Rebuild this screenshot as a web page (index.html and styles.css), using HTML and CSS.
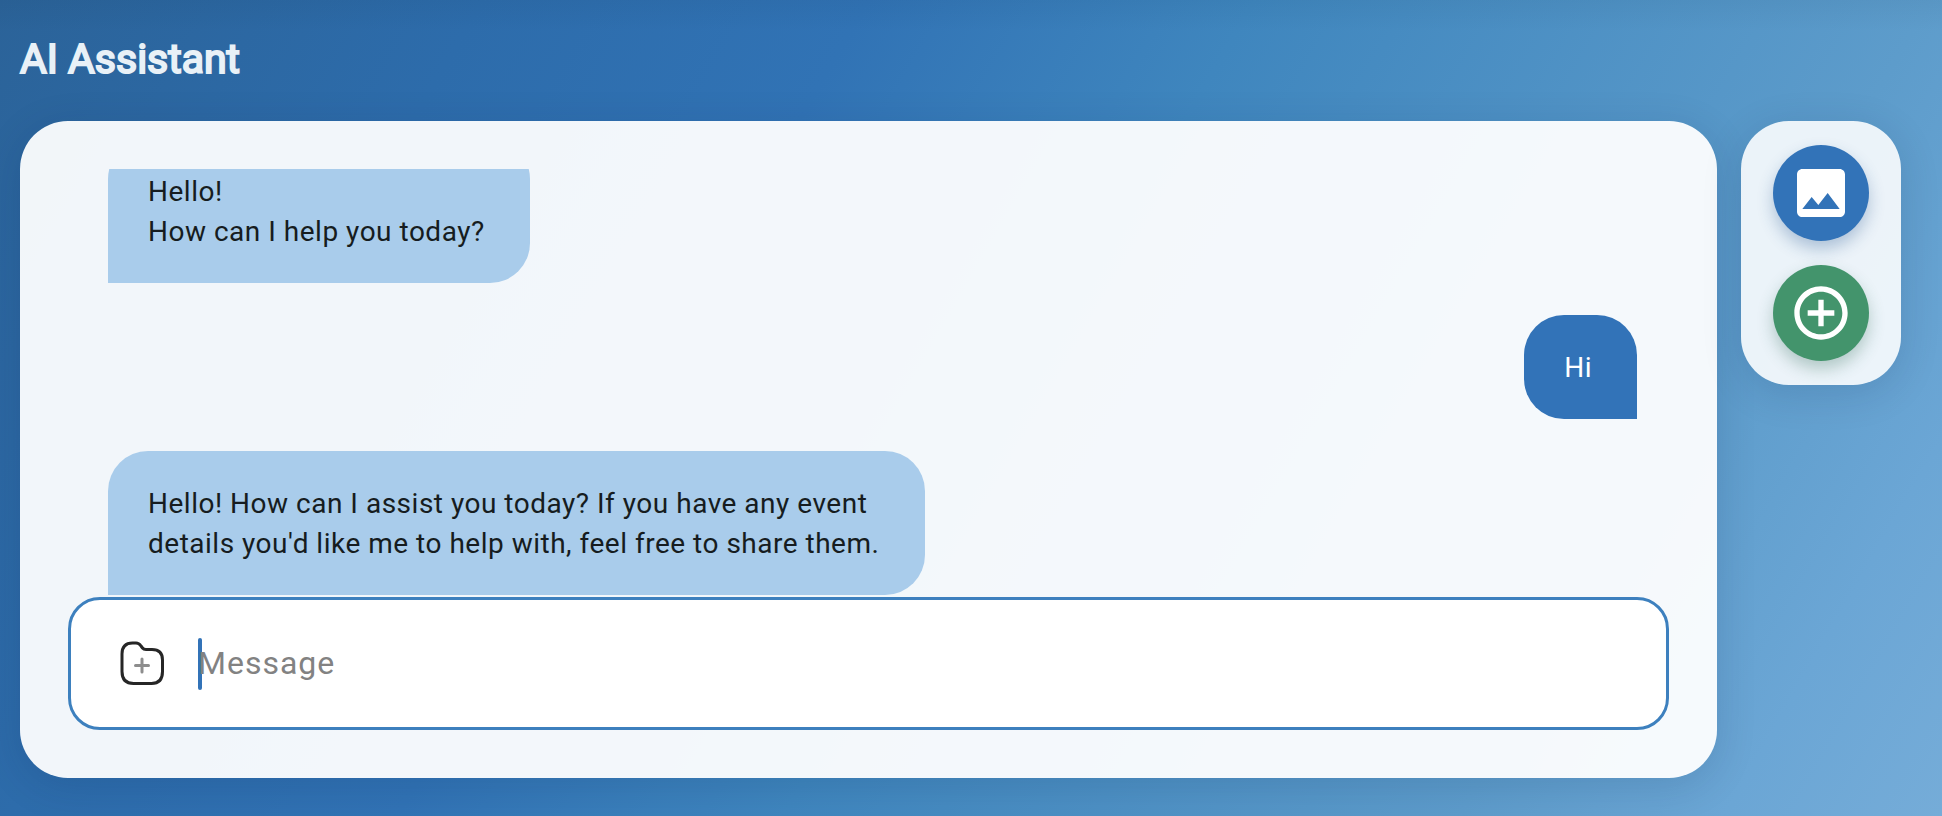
FILE: index.html
```html
<!DOCTYPE html>
<html lang="en">
<head>
<meta charset="utf-8">
<meta name="viewport" content="width=device-width, initial-scale=1">
<title>AI Assistant</title>
<link rel="stylesheet" href="styles.css">
</head>
<body>
<div class="page">
  <header class="header"><h1 class="title">AI Assistant</h1></header>
  <div class="workspace">
    <main class="chat">
      <section class="messages" aria-label="Conversation">
        <p class="bubble bubble-bot">Hello!<br>How can I help you today?</p>
        <p class="bubble bubble-user">Hi</p>
        <p class="bubble bubble-bot">Hello! How can I assist you today? If you have any event details you'd like me to help with, feel free to share them.</p>
      </section>
      <form class="composer">
        <button class="attach" type="button" aria-label="Add attachment">
          <svg viewBox="0 0 48 48" fill="none" stroke-linecap="round" stroke-linejoin="round">
            <path d="M3 14C3 6.500 6.500 3 13.500 3H17C19.500 3 20.500 3.800 22 6L23.500 8C24.500 9.300 25.500 9.500 27 9.500H33C40 9.500 43.500 13 43.500 20V31.500C43.500 39.500 39.500 43.500 32.500 43.500H14.500C6.500 43.500 3 39.500 3 31.500Z" stroke="#262626" stroke-width="3"/>
            <path d="M23 19V32M16.500 25.500H29.500" stroke="#8d8d8d" stroke-width="3"/>
          </svg>
        </button>
        <span class="caret"></span>
        <input class="message-input" type="text" placeholder="Message" aria-label="Message">
      </form>
    </main>
    <aside class="actions" aria-label="Actions">
      <button class="action action-image" type="button" aria-label="Add image">
        <svg viewBox="0 0 24 24" fill="#fff"><path d="M21 19V5c0-1.100-.9-2-2-2H5c-1.100 0-2 .9-2 2v14c0 1.100.9 2 2 2h14c1.100 0 2-.9 2-2zM8.500 13.500l2.500 3.010L14.500 12l4.500 6H5l3.500-4.500z"/></svg>
      </button>
      <button class="action action-new" type="button" aria-label="New chat">
        <svg viewBox="0 0 24 24" fill="#fff"><path d="M13 7h-2v4H7v2h4v4h2v-4h4v-2h-4V7zm-1-5C6.480 2 2 6.480 2 12s4.480 10 10 10 10-4.480 10-10S17.520 2 12 2zm0 18c-4.410 0-8-3.590-8-8s3.590-8 8-8 8 3.590 8 8-3.590 8-8 8z"/></svg>
      </button>
    </aside>
  </div>
</div>
</body>
</html>
```
FILE: styles.css
```css
* {
  box-sizing: border-box;
}

body {
  margin: 0;
  font-family: Roboto, "Liberation Sans", sans-serif;
  color: #161c20;
}

.page {
  display: flex;
  flex-direction: column;
  height: 100vh;
  padding: 0 41px 38px 20px;
  background:
    linear-gradient(rgba(0, 30, 50, 0.05), rgba(0, 30, 50, 0) 32px),
    linear-gradient(120deg, #2b6399 0%, #2d6cab 20%, #3173b5 36%, #3f86be 52%, #5d9ccb 80%, #6ba6d5 91%, #75acd8 100%);
}

.header {
  display: flex;
  flex: none;
  align-items: center;
  height: 121px;
  padding-bottom: 4px;
}

.title {
  margin: 0;
  font-size: 41px;
  line-height: 48px;
  font-weight: 400;
  color: #e9f1f7;
  -webkit-text-stroke: 2px #e9f1f7;
}

.workspace {
  display: flex;
  flex: 1;
  align-items: flex-start;
  gap: 24px;
  min-height: 0;
}

.chat {
  display: flex;
  flex: 1;
  flex-direction: column;
  align-self: stretch;
  min-width: 0;
  padding: 48px;
  border-radius: 48px;
  background: rgba(255, 255, 255, 0.94);
  box-shadow: 0 8px 40px rgba(0, 30, 70, 0.14);
}

.messages {
  display: flex;
  flex: 1;
  flex-direction: column;
  justify-content: flex-end;
  gap: 32px;
  min-height: 0;
  padding: 0 32px 2px 40px;
  overflow: hidden;
}

.bubble {
  flex: none;
  max-width: 817px;
  margin: 0;
  padding: 33px 45px 31px 40px;
  font-size: 28px;
  line-height: 40px;
  letter-spacing: 0.018em;
}

.bubble-bot {
  align-self: flex-start;
  border-radius: 40px 40px 40px 0;
  background: #a9cceb;
}

.bubble-user {
  align-self: flex-end;
  border-radius: 40px 40px 0 40px;
  background: #3273b8;
  color: #fff;
}

.composer {
  display: flex;
  flex: none;
  align-items: center;
  height: 133px;
  padding: 0 48px;
  border: 3px solid #3d80be;
  border-radius: 32px;
  background: #fff;
}

.attach {
  display: flex;
  flex: none;
  width: 48px;
  height: 48px;
  padding: 0;
  border: 0;
  background: none;
}

.attach svg {
  width: 48px;
  height: 48px;
}

.caret {
  flex: none;
  width: 4px;
  height: 52px;
  margin-left: 31px;
  border-radius: 2px;
  background: #3273b8;
}

.message-input {
  flex: 1;
  min-width: 0;
  height: 56px;
  margin-left: -4px;
  padding: 0 0 2px;
  border: 0;
  outline: 0;
  background: none;
  font: inherit;
  font-size: 32px;
  letter-spacing: 1px;
}

.message-input::placeholder {
  color: #828282;
  opacity: 1;
}

.actions {
  display: flex;
  flex: none;
  flex-direction: column;
  gap: 24px;
  padding: 24px 32px;
  border-radius: 48px;
  background: rgba(255, 255, 255, 0.88);
  box-shadow: 0 8px 40px rgba(0, 30, 70, 0.14);
}

.action {
  display: flex;
  align-items: center;
  justify-content: center;
  width: 96px;
  height: 96px;
  padding: 0;
  border: 0;
  border-radius: 50%;
}

.action svg {
  width: 64px;
  height: 64px;
}

.action-image {
  background: #3273b8;
  box-shadow: 0 8px 16px rgba(30, 80, 140, 0.3);
}

.action-new {
  background: #43946c;
  box-shadow: 0 8px 16px rgba(40, 100, 80, 0.3);
}
```
